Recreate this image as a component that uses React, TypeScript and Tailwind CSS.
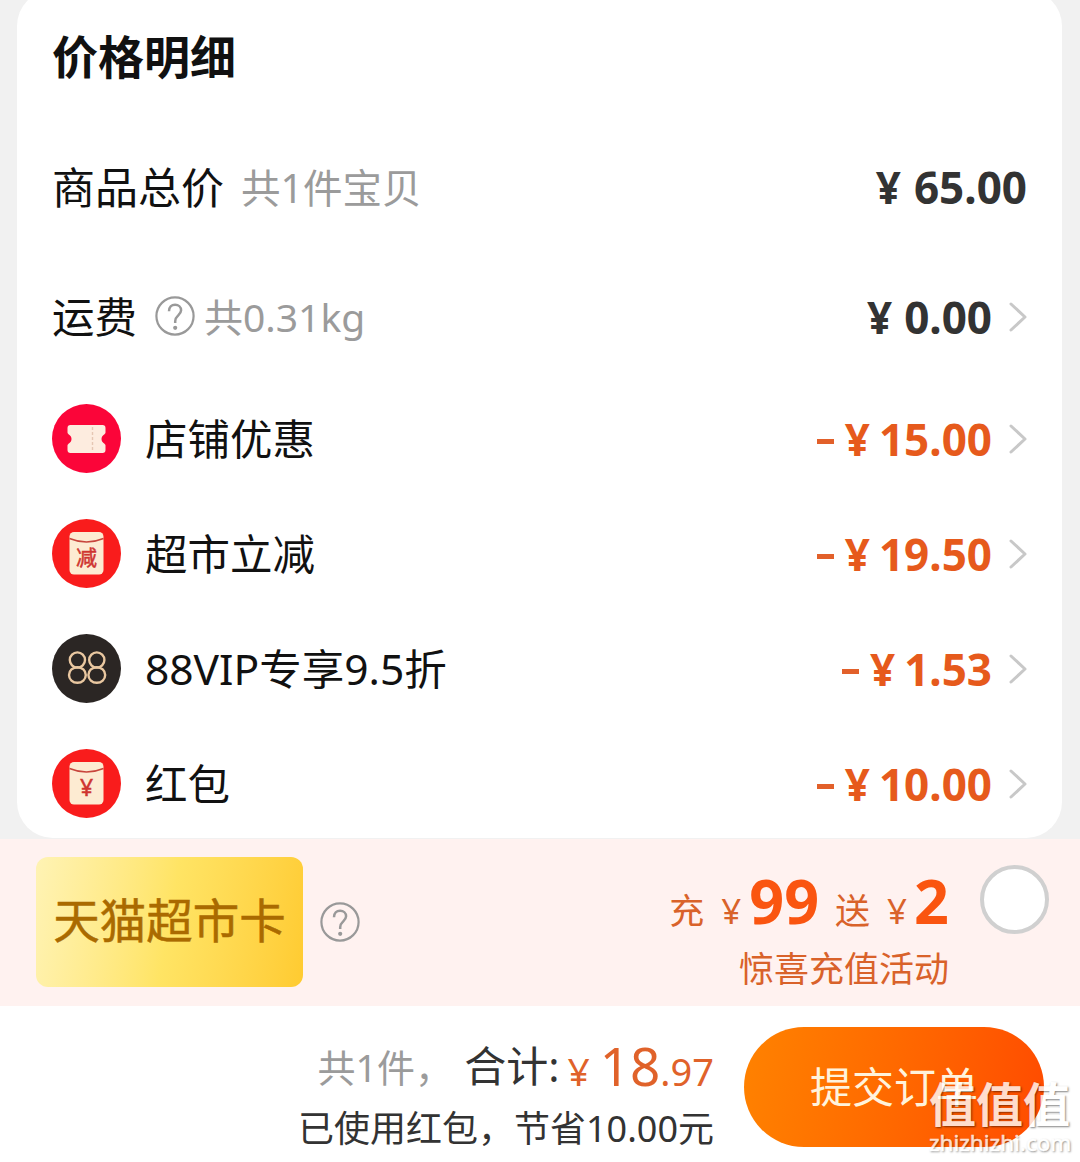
import { clsx } from 'clsx';

type Discount = {
  icon: 'coupon' | 'minus' | 'vip' | 'packet';
  label: string;
  amount: string;
};

const discounts: Discount[] = [
  { icon: 'coupon', label: '店铺优惠', amount: '15.00' },
  { icon: 'minus', label: '超市立减', amount: '19.50' },
  { icon: 'vip', label: '88VIP专享9.5折', amount: '1.53' },
  { icon: 'packet', label: '红包', amount: '10.00' },
];

function Chevron() {
  return (
    <svg width="18" height="32" viewBox="0 0 18 32" fill="none" className="ml-[17px] shrink-0">
      <path d="M2 3 L16 16 L2 29" stroke="#c8c8c8" strokeWidth="3" strokeLinecap="round" strokeLinejoin="round" />
    </svg>
  );
}

function HelpIcon({ className }: { className?: string }) {
  return (
    <svg width="40" height="40" viewBox="0 0 40 40" fill="none" className={clsx('shrink-0', className)}>
      <circle cx="20" cy="20" r="18.6" stroke="currentColor" strokeWidth="2.2" />
      <path
        d="M14 15.2 C14 11 16.6 8.8 20.1 8.8 C23.6 8.8 26.1 11.2 26.1 14.3 C26.1 17 24.6 18.3 22.8 19.9 C21 21.5 20.2 22.6 20.2 25.2 V27"
        stroke="currentColor"
        strokeWidth="2.5"
      />
      <circle cx="20.2" cy="31.8" r="2.1" fill="currentColor" />
    </svg>
  );
}

// Cream envelope shared by the two red badges
function Envelope({ char, size }: { char: string; size: number }) {
  return (
    <>
      <circle cx="34.5" cy="34.5" r="34.5" fill="#f91c1c" />
      <rect x="17.5" y="13" width="34" height="42.5" rx="4.5" fill="#fdebd2" />
      <path d="M17.5 19.5 Q34.5 26.5 51.5 19.5" stroke="#c8453c" strokeWidth="1.6" fill="none" />
      <text x="34.5" y="38" fontSize={size} fill="#cf3430" stroke="#cf3430" strokeWidth="0.5" textAnchor="middle" dominantBaseline="central">
        {char}
      </text>
    </>
  );
}

function Badge({ icon }: { icon: Discount['icon'] }) {
  return (
    <svg width="69" height="69" viewBox="0 0 69 69" className="shrink-0">
      {icon === 'coupon' && (
        <>
          <circle cx="34.5" cy="34.5" r="34.5" fill="#fb0539" />
          <path
            d="M18.5 21 H50.5 Q53.5 21 53.5 24 V28.5 C53.5 30.5 49.5 31 49.5 35 C49.5 39 53.5 39.5 53.5 41.5 V46 Q53.5 49 50.5 49 H18.5 Q15.5 49 15.5 46 V41.5 C15.5 39.5 19.5 39 19.5 35 C19.5 31 15.5 30.5 15.5 28.5 V24 Q15.5 21 18.5 21 Z"
            fill="#fdecdf"
          />
          <path d="M40.5 23 V48" stroke="#e6c7b4" strokeWidth="1.4" strokeDasharray="3 2" />
        </>
      )}
      {icon === 'minus' && <Envelope char="减" size={21} />}
      {icon === 'packet' && <Envelope char="¥" size={23} />}
      {icon === 'vip' && (
        <>
          <circle cx="34.5" cy="34.5" r="34.5" fill="#2b2624" />
          <g fill="none" stroke="#e9c7a0" strokeWidth="2.4">
            <ellipse cx="25.4" cy="26" rx="7.6" ry="7.6" />
            <ellipse cx="25.4" cy="41" rx="8.4" ry="7.8" />
            <ellipse cx="44.8" cy="26" rx="7.6" ry="7.6" />
            <ellipse cx="44.8" cy="41" rx="8.4" ry="7.8" />
          </g>
        </>
      )}
    </svg>
  );
}

export default function App() {
  return (
    <div className="relative flex h-[1162px] w-[1080px] flex-col overflow-hidden bg-[#f1f1f1] font-['Noto_Sans','Noto_Sans_CJK_SC',sans-serif] leading-none whitespace-nowrap text-[#111]">
      {/* 价格明细 */}
      <section className="-mt-[10px] mr-[18px] ml-[17px] h-[848px] shrink-0 rounded-[36px] bg-white px-[35px]">
        <h2 className="flex h-[132px] items-center text-[46px] font-bold">价格明细</h2>

        <div className="flex h-[130px] items-center">
          <span className="text-[43px]">商品总价</span>
          <span className="ml-[17px] pt-[3px] text-[39.5px] text-[#9b9b9b]">共1件宝贝</span>
          <span className="ml-auto text-[44px] font-bold text-[#333]">
            ¥<span className="ml-[13px]">65.00</span>
          </span>
        </div>

        <div className="flex h-[129px] items-center">
          <span className="pt-[2px] text-[42.5px]">运费</span>
          <HelpIcon className="mr-[9px] mb-[2px] ml-[18px] text-[#999]" />
          <span className="text-[39px] text-[#9b9b9b]">共0.31kg</span>
          <span className="ml-auto text-[44px] font-bold text-[#333]">
            ¥<span className="ml-[12px]">0.00</span>
          </span>
          <Chevron />
        </div>

        {discounts.map((d) => (
          <div key={d.icon} className="flex h-[115px] items-center">
            <Badge icon={d.icon} />
            <span className="ml-[24px] pt-[2px] text-[42.5px]">{d.label}</span>
            <span className="ml-auto flex items-center text-[44px] font-bold text-[#e65a1c]">
              <span className="mt-[5px] mr-[11px] h-[5px] w-[17px] bg-[#e2602a]" />
              ¥<span className="ml-[9px]">{d.amount}</span>
            </span>
            <Chevron />
          </div>
        ))}
      </section>

      {/* 充值活动 */}
      <section className="mt-px flex h-[167px] shrink-0 items-center bg-[#fff2f0] pb-[2px] pl-9">
        <div className="flex h-[130px] w-[267px] items-center justify-center rounded-[12px] bg-linear-100 from-[#fff3b4] via-[#ffe464] to-[#ffcb30] pb-[2px] text-[46.5px] text-[#aa6a00] [-webkit-text-stroke:0.5px_#aa6a00]">
          天猫超市卡
        </div>
        <HelpIcon className="ml-[17px] text-[#999]" />
        <div className="ml-auto flex flex-col items-end pt-[3px] text-[35px] text-[#d9622a]">
          <div className="flex items-baseline">
            <span>充</span>
            <span className="ml-[17px]">¥</span>
            <span className="ml-[8px] text-[61px] font-bold text-[#fa5510]">99</span>
            <span className="ml-[16px]">送</span>
            <span className="ml-[17px]">¥</span>
            <span className="ml-[7px] text-[61px] font-bold text-[#fa5510]">2</span>
          </div>
          <div className="mt-[20px] -mb-[10px]">惊喜充值活动</div>
        </div>
        <span className="mr-[31px] mb-[45px] ml-[31px] size-[69px] rounded-full border-4 border-[#d0d0d0] bg-white" />
      </section>

      {/* 提交订单 */}
      <footer className="flex flex-1 items-start justify-end bg-white pt-[21px] pr-[36px]">
        <div className="mr-[30px] flex flex-col items-end pt-[12px] text-[#333]">
          <div className="flex items-center">
            <div className="flex items-baseline">
              <span className="text-[38px] text-[#9b9b9b]">共1件，</span>
              <span className="ml-[11px] text-[42px]">合计:</span>
            </div>
            <div className="flex items-baseline text-[#e0622a]">
              <span className="ml-[8px] text-[39px]">¥</span>
              <span className="ml-[10px] text-[53px]">18</span>
              <span className="text-[38px]">.97</span>
            </div>
          </div>
          <div className="mt-[19px] text-[36px]">已使用红包，节省10.00元</div>
        </div>
        <button className="flex h-[120px] w-[300px] items-center justify-center rounded-full bg-linear-100 from-[#ff8200] to-[#ff4a00] text-[42px] text-[#fff3dc]">
          提交订单
        </button>
      </footer>

      {/* Watermark */}
      <div className="absolute top-[1079px] left-[929px] flex flex-col text-white opacity-80 [text-shadow:1px_1px_2px_rgba(0,0,0,0.6)]">
        <span className="text-[47px] leading-[51px] font-bold">值值值</span>
        <span className="text-[22.5px] leading-[26px] [-webkit-text-stroke:0.5px_white]">zhizhizhi.com</span>
      </div>
    </div>
  );
}
